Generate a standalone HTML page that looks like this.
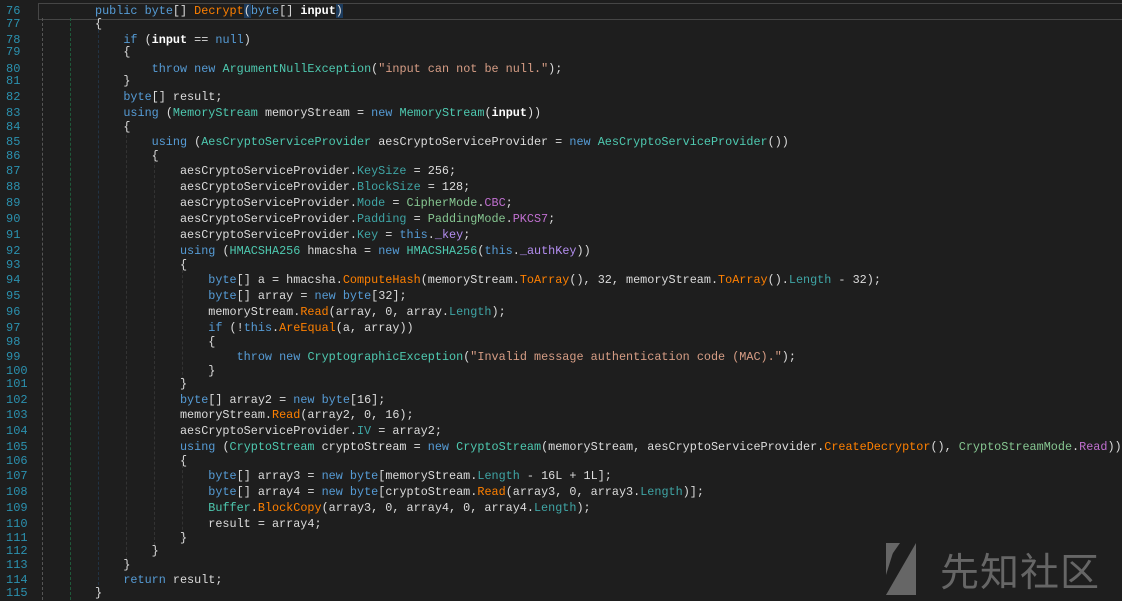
<!DOCTYPE html>
<html><head><meta charset="utf-8"><style>
body{margin:0;width:1122px;height:600px;background:#1e1e1e;overflow:hidden;position:relative;font-family:"Liberation Mono","Noto Sans CJK SC",monospace;font-size:11.8px;color:#dcdcdc}
.l{position:absolute;left:0;height:15px;line-height:15px;white-space:pre}
.n{position:absolute;left:6px;width:22px;color:#2b91af;font-size:12px}
.c{position:absolute;left:95px}
.k{color:#569cd6}.t{color:#4ec9b0}.e{color:#86c691}.m{color:#ff8000}.p{color:#3fa5a5}.f{color:#b48ef0}.em{color:#c070d0}.s{color:#d69d85}.b{font-weight:bold;color:#fff}
.g{position:absolute;width:0;border-left:1px dashed #444}
</style></head><body>
<div style="position:absolute;left:38px;top:3px;width:1083px;height:15px;border:1px solid #464646"></div>
<div class="g" style="left:42px;top:18px;height:582px;border-color:#555"></div>
<div class="g" style="left:70px;top:18px;height:582px;border-color:#1e5a3a"></div>
<div class="g" style="left:98px;top:30px;height:560px;border-color:#234"></div>
<div class="g" style="left:126px;top:87px;height:0"></div>
<div class="g" style="left:126px;top:130px;height:440px;border-color:#333"></div>
<div class="g" style="left:154px;top:160px;height:385px;border-color:#333"></div>
<div class="g" style="left:182px;top:270px;height:110px;border-color:#333"></div>
<div class="g" style="left:182px;top:465px;height:75px;border-color:#333"></div>
<div class="l" style="top:4px"><span class="n">76</span><span class="c"><span class="k">public</span> <span class="k">byte</span>[] <span class="m">Decrypt</span><span style="background:#1b3a5c">(</span><span class="k">byte</span>[] <span class="b">input</span><span style="background:#1b3a5c">)</span></span></div>
<div class="l" style="top:17px"><span class="n">77</span><span class="c">{</span></div>
<div class="l" style="top:33px"><span class="n">78</span><span class="c">    <span class="k">if</span> (<span class="b">input</span> == <span class="k">null</span>)</span></div>
<div class="l" style="top:45px"><span class="n">79</span><span class="c">    {</span></div>
<div class="l" style="top:62px"><span class="n">80</span><span class="c">        <span class="k">throw</span> <span class="k">new</span> <span class="t">ArgumentNullException</span>(<span class="s">"input can not be null."</span>);</span></div>
<div class="l" style="top:74px"><span class="n">81</span><span class="c">    }</span></div>
<div class="l" style="top:90px"><span class="n">82</span><span class="c">    <span class="k">byte</span>[] result;</span></div>
<div class="l" style="top:106px"><span class="n">83</span><span class="c">    <span class="k">using</span> (<span class="t">MemoryStream</span> memoryStream = <span class="k">new</span> <span class="t">MemoryStream</span>(<span class="b">input</span>))</span></div>
<div class="l" style="top:120px"><span class="n">84</span><span class="c">    {</span></div>
<div class="l" style="top:135px"><span class="n">85</span><span class="c">        <span class="k">using</span> (<span class="t">AesCryptoServiceProvider</span> aesCryptoServiceProvider = <span class="k">new</span> <span class="t">AesCryptoServiceProvider</span>())</span></div>
<div class="l" style="top:149px"><span class="n">86</span><span class="c">        {</span></div>
<div class="l" style="top:164px"><span class="n">87</span><span class="c">            aesCryptoServiceProvider.<span class="p">KeySize</span> = 256;</span></div>
<div class="l" style="top:180px"><span class="n">88</span><span class="c">            aesCryptoServiceProvider.<span class="p">BlockSize</span> = 128;</span></div>
<div class="l" style="top:196px"><span class="n">89</span><span class="c">            aesCryptoServiceProvider.<span class="p">Mode</span> = <span class="e">CipherMode</span>.<span class="em">CBC</span>;</span></div>
<div class="l" style="top:212px"><span class="n">90</span><span class="c">            aesCryptoServiceProvider.<span class="p">Padding</span> = <span class="e">PaddingMode</span>.<span class="em">PKCS7</span>;</span></div>
<div class="l" style="top:228px"><span class="n">91</span><span class="c">            aesCryptoServiceProvider.<span class="p">Key</span> = <span class="k">this</span>.<span class="f">_key</span>;</span></div>
<div class="l" style="top:244px"><span class="n">92</span><span class="c">            <span class="k">using</span> (<span class="t">HMACSHA256</span> hmacsha = <span class="k">new</span> <span class="t">HMACSHA256</span>(<span class="k">this</span>.<span class="f">_authKey</span>))</span></div>
<div class="l" style="top:258px"><span class="n">93</span><span class="c">            {</span></div>
<div class="l" style="top:273px"><span class="n">94</span><span class="c">                <span class="k">byte</span>[] a = hmacsha.<span class="m">ComputeHash</span>(memoryStream.<span class="m">ToArray</span>(), 32, memoryStream.<span class="m">ToArray</span>().<span class="p">Length</span> - 32);</span></div>
<div class="l" style="top:289px"><span class="n">95</span><span class="c">                <span class="k">byte</span>[] array = <span class="k">new</span> <span class="k">byte</span>[32];</span></div>
<div class="l" style="top:305px"><span class="n">96</span><span class="c">                memoryStream.<span class="m">Read</span>(array, 0, array.<span class="p">Length</span>);</span></div>
<div class="l" style="top:321px"><span class="n">97</span><span class="c">                <span class="k">if</span> (!<span class="k">this</span>.<span class="m">AreEqual</span>(a, array))</span></div>
<div class="l" style="top:335px"><span class="n">98</span><span class="c">                {</span></div>
<div class="l" style="top:350px"><span class="n">99</span><span class="c">                    <span class="k">throw</span> <span class="k">new</span> <span class="t">CryptographicException</span>(<span class="s">"Invalid message authentication code (MAC)."</span>);</span></div>
<div class="l" style="top:364px"><span class="n">100</span><span class="c">                }</span></div>
<div class="l" style="top:377px"><span class="n">101</span><span class="c">            }</span></div>
<div class="l" style="top:393px"><span class="n">102</span><span class="c">            <span class="k">byte</span>[] array2 = <span class="k">new</span> <span class="k">byte</span>[16];</span></div>
<div class="l" style="top:408px"><span class="n">103</span><span class="c">            memoryStream.<span class="m">Read</span>(array2, 0, 16);</span></div>
<div class="l" style="top:424px"><span class="n">104</span><span class="c">            aesCryptoServiceProvider.<span class="p">IV</span> = array2;</span></div>
<div class="l" style="top:440px"><span class="n">105</span><span class="c">            <span class="k">using</span> (<span class="t">CryptoStream</span> cryptoStream = <span class="k">new</span> <span class="t">CryptoStream</span>(memoryStream, aesCryptoServiceProvider.<span class="m">CreateDecryptor</span>(), <span class="e">CryptoStreamMode</span>.<span class="em">Read</span>))</span></div>
<div class="l" style="top:454px"><span class="n">106</span><span class="c">            {</span></div>
<div class="l" style="top:469px"><span class="n">107</span><span class="c">                <span class="k">byte</span>[] array3 = <span class="k">new</span> <span class="k">byte</span>[memoryStream.<span class="p">Length</span> - 16L + 1L];</span></div>
<div class="l" style="top:485px"><span class="n">108</span><span class="c">                <span class="k">byte</span>[] array4 = <span class="k">new</span> <span class="k">byte</span>[cryptoStream.<span class="m">Read</span>(array3, 0, array3.<span class="p">Length</span>)];</span></div>
<div class="l" style="top:501px"><span class="n">109</span><span class="c">                <span class="t">Buffer</span>.<span class="m">BlockCopy</span>(array3, 0, array4, 0, array4.<span class="p">Length</span>);</span></div>
<div class="l" style="top:517px"><span class="n">110</span><span class="c">                result = array4;</span></div>
<div class="l" style="top:531px"><span class="n">111</span><span class="c">            }</span></div>
<div class="l" style="top:544px"><span class="n">112</span><span class="c">        }</span></div>
<div class="l" style="top:558px"><span class="n">113</span><span class="c">    }</span></div>
<div class="l" style="top:573px"><span class="n">114</span><span class="c">    <span class="k">return</span> result;</span></div>
<div class="l" style="top:586px"><span class="n">115</span><span class="c">}</span></div>
<svg style="position:absolute;left:886px;top:543px" width="44" height="54"><polygon points="0,0 10,0 0,32" fill="#666"/><polygon points="30,0 30,52 0,52" fill="#666" transform="translate(0,0)"/><polygon points="0,52 30,8 30,52" fill="#666"/><polygon points="0,0 14,0 0,20" fill="#666"/></svg>
<div style="position:absolute;left:940px;top:547px;font-family:'Noto Sans CJK SC',sans-serif;font-size:39px;line-height:46px;color:#666;letter-spacing:1px">先知社区</div>
</body></html>
